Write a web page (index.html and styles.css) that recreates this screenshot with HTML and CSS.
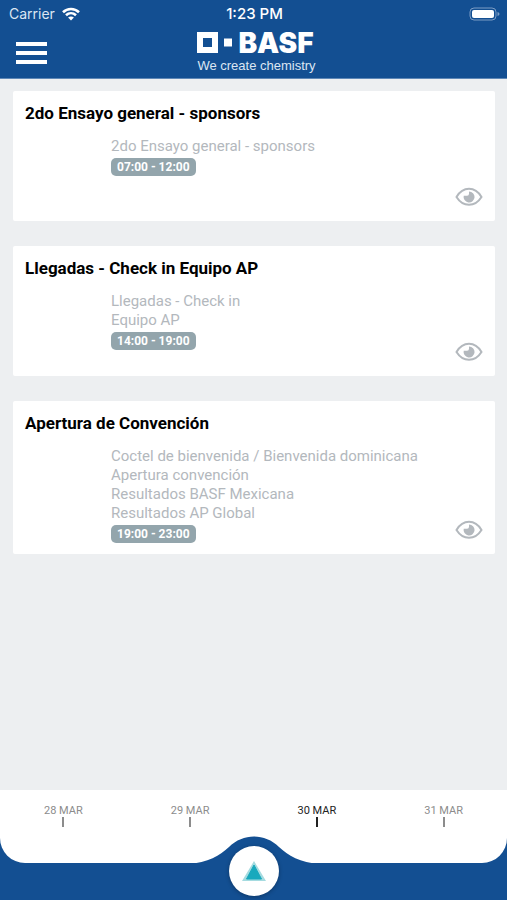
FILE: index.html
```html
<!DOCTYPE html>
<html lang="es">
<head>
    <meta charset="UTF-8">
    <meta name="viewport" content="width=device-width, initial-scale=1.0">
    <title>Agenda</title>
    <link rel="stylesheet" href="styles.css">
</head>
<body>
    <header class="header">
        <div class="status">
            <div class="carrier">
                <span>Carrier</span>
                <svg width="18" height="14" viewBox="0 0 18 14" fill="none" stroke="#fff" stroke-width="2.6">
                    <path d="M1 5.2C5.5 .9 12.5 .9 17 5.2"/>
                    <path d="M4 8.3C6.9 5.6 11.1 5.6 14 8.3"/>
                    <path d="M9 13.6L6.1 10.6C7.8 9.2 10.2 9.2 11.9 10.6Z" fill="#fff" stroke="none"/>
                </svg>
            </div>
            <span class="clock">1:23 PM</span>
            <svg class="battery" width="31" height="14" viewBox="0 0 31 14">
                <rect x="1" y="1" width="26" height="12" rx="4" fill="none" stroke="#7d9dc4"/>
                <rect x="3" y="3" width="22" height="8" rx="2" fill="#fff"/>
                <path d="M28.5 5v4q2-.6 2-2t-2-2z" fill="#7d9dc4"/>
            </svg>
        </div>
        <div class="topbar">
            <button class="menu" aria-label="Menú">
                <span></span>
                <span></span>
                <span></span>
            </button>
            <div class="logo">
                <div class="logo-mark">
                    <svg width="36" height="21" viewBox="0 0 36 21" fill="#fff">
                        <path fill-rule="evenodd" d="M0 0h21v21H0zM6 6v9h9V6z"/>
                        <path d="M27 6.5h8v8h-8z"/>
                    </svg>
                    <span>BASF</span>
                </div>
                <div class="slogan">We create chemistry</div>
            </div>
        </div>
    </header>

    <main class="agenda">
        <article class="card">
            <h2>2do Ensayo general - sponsors</h2>
            <div class="detail">
                <p>2do Ensayo general - sponsors</p>
                <span class="time">07:00 - 12:00</span>
            </div>
            <button class="view" aria-label="Ver">
                <svg width="28" height="20" viewBox="0 0 28 20">
                    <path d="M1.5 10C8-.9 20-.9 26.5 10C20 20.4 8 20.4 1.5 10Z" fill="none" stroke="#b3b8bd" stroke-width="2"/>
                    <path d="M14 4.5a5.5 5.5 0 1 1-5.3 4.3h3.2a2 2 0 0 0 2.1-2z" fill="#b3b8bd"/>
                </svg>
            </button>
        </article>

        <article class="card">
            <h2>Llegadas - Check in Equipo AP</h2>
            <div class="detail">
                <p>Llegadas - Check in<br>Equipo AP</p>
                <span class="time">14:00 - 19:00</span>
            </div>
            <button class="view" aria-label="Ver">
                <svg width="28" height="20" viewBox="0 0 28 20">
                    <path d="M1.5 10C8-.9 20-.9 26.5 10C20 20.4 8 20.4 1.5 10Z" fill="none" stroke="#b3b8bd" stroke-width="2"/>
                    <path d="M14 4.5a5.5 5.5 0 1 1-5.3 4.3h3.2a2 2 0 0 0 2.1-2z" fill="#b3b8bd"/>
                </svg>
            </button>
        </article>

        <article class="card">
            <h2>Apertura de Convención</h2>
            <div class="detail">
                <p>Coctel de bienvenida / Bienvenida dominicana<br>Apertura convención<br>Resultados BASF Mexicana<br>Resultados AP Global</p>
                <span class="time">19:00 - 23:00</span>
            </div>
            <button class="view" aria-label="Ver">
                <svg width="28" height="20" viewBox="0 0 28 20">
                    <path d="M1.5 10C8-.9 20-.9 26.5 10C20 20.4 8 20.4 1.5 10Z" fill="none" stroke="#b3b8bd" stroke-width="2"/>
                    <path d="M14 4.5a5.5 5.5 0 1 1-5.3 4.3h3.2a2 2 0 0 0 2.1-2z" fill="#b3b8bd"/>
                </svg>
            </button>
        </article>
    </main>

    <footer class="footer">
        <nav class="days">
            <button>28 MAR</button>
            <button>29 MAR</button>
            <button class="active">30 MAR</button>
            <button>31 MAR</button>
        </nav>
        <div class="bump">
            <svg width="132" height="28" viewBox="0 0 132 28">
                <path d="M0 28C20 27 32 19 41 11C55-3 77-3 91 11C100 19 112 27 132 28Z" fill="#134f92"/>
            </svg>
        </div>
        <div class="bottom">
            <button class="up" aria-label="Subir">
                <svg width="26" height="22" viewBox="0 0 26 22">
                    <path d="M13 1L25 21H1Z" fill="#a5dbe0"/>
                    <path d="M13 5L20.5 19H5.5Z" fill="#19a9bd" stroke="#19a9bd"/>
                </svg>
            </button>
        </div>
    </footer>
</body>
</html>
```
FILE: styles.css
```css
* {
    box-sizing: border-box;
}

body {
    margin: 0;
    min-height: 100vh;
    display: flex;
    flex-direction: column;
    background-color: #edeff1;
    font-family: Roboto, sans-serif;
}

button {
    border: none;
    background: none;
    padding: 0;
    font-family: inherit;
    cursor: pointer;
}

svg {
    display: block;
}

.header {
    background-color: #134f92;
    color: #fff;
    border-bottom: 1px solid #5f88b7;
}

.status {
    display: grid;
    grid-template-columns: 1fr auto 1fr;
    align-items: center;
    height: 27px;
    padding: 0 7px 0 9px;
    font-family: Inter, sans-serif;
    font-size: 14px;
}

.carrier {
    display: flex;
    align-items: center;
    gap: 7px;
    color: #dce6f2;
}

.clock {
    font-size: 15px;
    font-weight: 500;
}

.battery {
    justify-self: end;
}

.topbar {
    display: grid;
    grid-template-columns: 1fr auto 1fr;
    align-items: center;
    height: 51px;
    padding: 0 16px;
}

.menu {
    display: flex;
    flex-direction: column;
    gap: 5px;
    width: 31px;
}

.menu span {
    height: 4px;
    background-color: #fff;
}

.logo {
    padding-left: 6px;
}

.logo-mark {
    display: flex;
    align-items: center;
    gap: 5px;
    height: 22px;
    font-family: Inter, sans-serif;
    font-size: 28px;
    font-weight: 900;
    line-height: 22px;
}

.slogan {
    margin-top: 4px;
    font-family: "Liberation Sans", Arial, sans-serif;
    font-size: 13px;
    line-height: 16px;
    color: #dce6f2;
}

.agenda {
    flex: 1;
    display: flex;
    flex-direction: column;
    gap: 25px;
    padding: 12px 12px 25px 13px;
}

.card {
    display: grid;
    grid-template-columns: 1fr auto;
    grid-template-rows: auto 1fr;
    min-height: 130px;
    padding: 11px 12px;
    background-color: #fff;
    border-radius: 2px;
}

.card h2 {
    grid-column: 1 / 3;
    margin: 0 0 13px;
    font-size: 17px;
    font-weight: 700;
    line-height: 22px;
    color: #000;
}

.detail {
    padding-left: 86px;
}

.detail p {
    margin: 0 0 2px;
    font-size: 15px;
    line-height: 19px;
    color: #b3b8bd;
}

.time {
    display: block;
    width: fit-content;
    padding: 0 6px;
    border-radius: 5px;
    background-color: #93a5ac;
    color: #fff;
    font-size: 12px;
    font-weight: 700;
    line-height: 18px;
}

.view {
    align-self: end;
    margin-bottom: 3px;
}

.footer {
    position: relative;
    background-color: #134f92;
}

.days {
    display: grid;
    grid-template-columns: repeat(4, 1fr);
    align-items: start;
    height: 73px;
    padding-top: 14px;
    background-color: #fff;
    border-radius: 0 0 25px 25px;
}

.days button {
    display: flex;
    flex-direction: column;
    align-items: center;
    font-size: 11px;
    line-height: 13px;
    color: #8c8c8c;
}

.days button::after {
    content: "";
    width: 2px;
    height: 10px;
    background-color: #8c8c8c;
}

.days .active {
    color: #222;
}

.days .active::after {
    background-color: #222;
}

/* curve that rises over the white strip behind the round button */
.bump {
    position: absolute;
    top: 46px;
    left: 0;
    right: 0;
    display: flex;
    justify-content: center;
    pointer-events: none;
}

.bottom {
    position: relative;
    display: flex;
    justify-content: center;
    height: 37px;
}

.up {
    display: flex;
    align-items: center;
    justify-content: center;
    width: 50px;
    height: 50px;
    margin-top: -17px;
    border-radius: 50%;
    background-color: #fff;
    box-shadow: 0 1px 4px rgba(0, 0, 0, 0.3);
}
```
